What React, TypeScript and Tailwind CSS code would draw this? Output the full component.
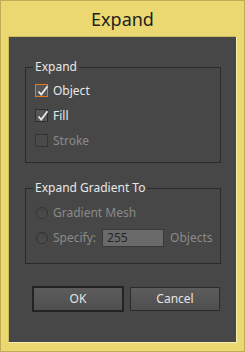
import React from "react";

const font = { fontFamily: '"Noto Sans", "Open Sans", "Liberation Sans", sans-serif' };

const Check: React.FC = () => (
	<svg width="13" height="13" viewBox="0 0 13 13" className="absolute left-0 top-0 overflow-visible">
		<path d="M2.5 6.5 L5.2 9.6 L11.5 1.2" fill="none" stroke="#e8e8e8" strokeWidth="1.8" />
	</svg>
);

const CheckRow: React.FC<{ label: string; checked?: boolean; focused?: boolean; disabled?: boolean }> = ({
	label,
	checked,
	focused,
	disabled,
}) => (
	<div className="flex items-center h-[13px]">
		<div
			className={`relative w-[13px] h-[13px] border ${
				focused ? "border-[#e4781e]" : disabled ? "border-[#353535]" : "border-[#2e2e2e]"
			} ${disabled ? "bg-[#4a4a4a]" : "bg-[#555555]"}`}
		>
			{checked && <Check />}
		</div>
		<span className={`ml-[5px] text-[12px] leading-none ${disabled ? "text-[#8a8a8a]" : "text-[#e8e8e8]"}`}>
			{label}
		</span>
	</div>
);

const Radio: React.FC = () => (
	<div className="w-[12px] h-[12px] rounded-full border border-[#343434] bg-gradient-to-b from-[#444444] to-[#4e4e4e]" />
);

export default function App() {
	return (
		<div style={font} className="w-[245px] h-[352px] border border-[#bfac55] bg-[#ecd870] flex flex-col">
			{/* title */}
			<div className="h-[35px] flex items-center justify-center text-[18px] text-[#1e1e1e] pt-[1px]">Expand</div>

			{/* dark panel */}
			<div className="mx-[7px] h-[307px] border border-t-[#cdbb5e] border-l-[#cdbb5e] border-b-[#f7eeb2] border-r-[#f7eeb2]">
				<div className="h-full bg-[#474747] pl-[16px] pr-[15px] pt-[23px] flex flex-col">
					<fieldset className="border border-[#2a2a2a] h-[103px] pl-[9px] pt-[10px] flex flex-col gap-[12px]">
						<legend className="-ml-[2px] px-[2px] text-[12px] text-[#e8e8e8] leading-[14px]">Expand</legend>
						<CheckRow label="Object" checked focused />
						<CheckRow label="Fill" checked />
						<CheckRow label="Stroke" disabled />
					</fieldset>

					<fieldset className="mt-[18px] border border-[#2a2a2a] h-[83px] pl-[10px] pt-[12px] flex flex-col">
						<legend className="-ml-[3px] px-[2px] text-[12px] text-[#e8e8e8] leading-[14px]">
							Expand Gradient To
						</legend>
						<div className="flex items-center h-[12px]">
							<Radio />
							<span className="ml-[5px] text-[12px] leading-none text-[#8a8a8a]">Gradient Mesh</span>
						</div>
						<div className="flex items-center mt-[10px]">
							<Radio />
							<span className="ml-[5px] text-[12px] leading-none text-[#8a8a8a]">Specify:</span>
							<div className="ml-[6px] w-[62px] h-[18px] border border-[#383838] bg-[#6a6a6a] flex items-center pl-[4px] text-[12px] text-[#262626]">
								255
							</div>
							<span className="ml-[6px] text-[12px] leading-none text-[#8a8a8a]">Objects</span>
						</div>
					</fieldset>

					<div className="mt-[22px] flex pl-[7px] gap-[6px]">
						<button className="w-[92px] h-[26px] border-2 border-[#232323] bg-gradient-to-b from-[#5c5c5c] to-[#4f4f4f] text-[12px] text-[#e4e4e4]">
							OK
						</button>
						<button className="mt-[1px] w-[90px] h-[24px] border border-[#2c2c2c] bg-gradient-to-b from-[#5c5c5c] to-[#4f4f4f] text-[12px] text-[#e4e4e4]">
							Cancel
						</button>
					</div>
				</div>
			</div>
		</div>
	);
}
